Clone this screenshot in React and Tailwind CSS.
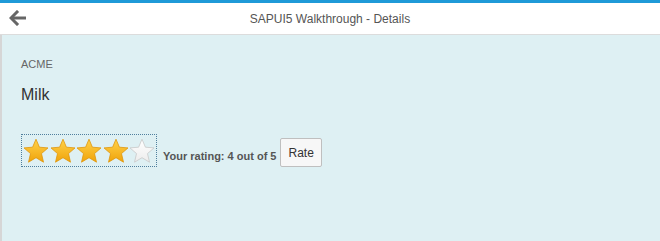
import React from 'react';

const Star = ({ filled, id }) => (
  <svg width="26" height="26" viewBox="0 0 26 26" className="block">
    <defs>
      <linearGradient id={`g${id}`} x1="0" y1="0" x2="0" y2="1">
        {filled ? (
          <>
            <stop offset="0" stopColor="#ffd24a" />
            <stop offset="1" stopColor="#f0a30a" />
          </>
        ) : (
          <>
            <stop offset="0" stopColor="#ffffff" />
            <stop offset="1" stopColor="#ececec" />
          </>
        )}
      </linearGradient>
    </defs>
    <path
      d="M13 1.2 L16.4 9.2 L25 9.9 L18.5 15.6 L20.5 24.2 L13 19.7 L5.5 24.2 L7.5 15.6 L1 9.9 L9.6 9.2 Z"
      fill={`url(#g${id})`}
      stroke={filled ? '#e0950a' : '#c8c8c8'}
      strokeWidth="0.8"
      strokeLinejoin="round"
    />
  </svg>
);

export default function App() {
  const rating = 4;
  return (
    <div className="flex h-[241px] w-[660px] flex-col overflow-hidden font-['Liberation_Sans',Arial,sans-serif]">
      <div className="h-[3px] bg-[#1f9ad8]" />
      <header className="relative flex h-[32px] items-center justify-center border-b border-[#dcdcdc] bg-white">
        <button className="absolute left-[9px] top-[7px] text-[#666]">
          <svg width="18" height="16" viewBox="0 0 18 16">
            <path d="M8 2 L2 8 L8 14" fill="none" stroke="#666" strokeWidth="3" strokeLinecap="square" />
            <path d="M3 8 H17" stroke="#666" strokeWidth="3" />
          </svg>
        </button>
        <h1 className="text-[12px] text-[#555]">SAPUI5 Walkthrough - Details</h1>
      </header>
      <main className="flex-1 border-l-2 border-[#d6d6d6] bg-[#def0f3] pl-[19px] pt-[24px]">
        <div className="text-[11px] leading-none text-[#666]">ACME</div>
        <div className="mt-[17px] text-[16px] leading-none text-[#333]">Milk</div>
        <div className="mt-[31px] flex items-start">
          <div className="flex h-[33px] items-center gap-[0.5px] border border-dotted border-[#4f7f9d] px-[1px]">
            {[1, 2, 3, 4, 5].map((n) => (
              <Star key={n} id={n} filled={n <= rating} />
            ))}
          </div>
          <span className="ml-[6px] mt-[14px] text-[11px] font-bold text-[#555]">
            Your rating: {rating} out of 5
          </span>
          <button className="ml-[4px] mt-[4px] h-[29px] rounded-[2px] border border-[#bfbfbf] bg-[#f7f7f7] px-[7px] text-[12px] text-[#333]">
            Rate
          </button>
        </div>
      </main>
    </div>
  );
}
